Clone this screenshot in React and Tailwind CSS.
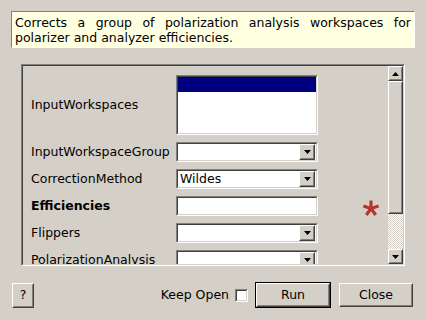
function Sunken({ className = '', inner = '', children }) {
  return (
    <div className={`border border-t-[#808080] border-l-[#808080] border-b-white border-r-white ${className}`}>
      <div className={`h-full w-full border border-t-[#404040] border-l-[#404040] border-b-[#d4d0c8] border-r-[#d4d0c8] ${inner}`}>
        {children}
      </div>
    </div>
  );
}

function Raised({ className = '', inner = '', children }) {
  return (
    <div className={`border border-t-white border-l-white border-b-[#404040] border-r-[#404040] ${className}`}>
      <div className={`flex h-full w-full items-center justify-center border border-t-[#d4d0c8] border-l-[#d4d0c8] border-b-[#808080] border-r-[#808080] ${inner}`}>
        {children}
      </div>
    </div>
  );
}

function Arrow({ up }) {
  return (
    <svg width="7" height="4" viewBox="0 0 7 4">
      <path d={up ? 'M3.5 0 L7 4 L0 4 Z' : 'M0 0 L7 0 L3.5 4 Z'} fill="#000" />
    </svg>
  );
}

function Combo({ value }) {
  return (
    <Sunken className="h-[20px] w-[142px]" inner="flex items-center bg-white">
      <span className="flex-1 pl-[2px] leading-none">{value}</span>
      <Raised className="mr-[1px] h-[16px] w-[16px] bg-[#d4d0c8]">
        <Arrow />
      </Raised>
    </Sunken>
  );
}

function Row({ label, bold, children, extra }) {
  return (
    <div className="flex h-[20px] items-center">
      <div className={`w-[145px] whitespace-nowrap ${bold ? 'font-bold' : ''}`}>{label}</div>
      {children}
      {extra}
    </div>
  );
}

function Asterisk() {
  const arms = [[0, -8], [7.6, -2.5], [4.7, 6.5], [-4.7, 6.5], [-7.6, -2.5]];
  return (
    <svg width="16" height="16" viewBox="-8 -8.5 16 16" className="ml-[45px] mt-[4px]">
      {arms.map(([x, y], i) => (
        <line key={i} x1="0" y1="0" x2={x} y2={y} stroke="#b5372a" strokeWidth="3.2" />
      ))}
    </svg>
  );
}

export default function App() {
  return (
    <div className="flex h-[320px] w-[426px] flex-col overflow-hidden bg-[#d4d0c8] pt-[11px] text-[12.5px] text-black" style={{ fontFamily: '"DejaVu Sans", sans-serif' }}>
      {/* description */}
      <div className="ml-[11px] h-[37px] w-[404px] border border-t-[#808080] border-l-[#808080] border-b-white border-r-white bg-[#ffffe1] px-[3px] pt-[3px] leading-[15px]">
        <p className="text-justify [text-align-last:justify]">
          Corrects a group of polarization analysis workspaces for
        </p>
        <p>polarizer and analyzer efficiencies.</p>
      </div>

      {/* property frame */}
      <Sunken className="ml-[21px] mt-[16px] h-[202px] w-[384px]" inner="flex overflow-hidden">
        <div className="flex flex-1 flex-col gap-[7px] overflow-hidden pl-[8px] pt-[9px]">
          <div className="flex h-[60px] shrink-0 items-center">
            <div className="w-[145px]">InputWorkspaces</div>
            <Sunken className="h-[60px] w-[142px]" inner="bg-white">
              <div className="h-[15px] bg-[#000080]" />
            </Sunken>
          </div>
          <Row label="InputWorkspaceGroup"><Combo value="" /></Row>
          <Row label="CorrectionMethod"><Combo value="Wildes" /></Row>
          <Row label="Efficiencies" bold extra={<Asterisk />}>
            <Sunken className="h-[20px] w-[142px]" inner="bg-white" />
          </Row>
          <Row label="Flippers"><Combo value="" /></Row>
          <div className="shrink-0">
            <Row label="PolarizationAnalysis"><Combo value="" /></Row>
          </div>
        </div>

        {/* scrollbar */}
        <div className="flex w-[15px] flex-col">
          <Raised className="h-[15px] bg-[#d4d0c8]"><Arrow up /></Raised>
          <Raised className="h-[133px] bg-[#d4d0c8]" />
          <div className="flex-1 bg-[repeating-conic-gradient(#ffffff_0_25%,#d4d0c8_0_50%)] bg-[length:2px_2px]" />
          <Raised className="h-[15px] bg-[#d4d0c8]"><Arrow /></Raised>
        </div>
      </Sunken>

      {/* buttons */}
      <div className="mt-[16px] flex h-[26px] items-center pl-[12px] pr-[13px]">
        <Raised className="h-[25px] w-[22px]">?</Raised>
        <div className="flex-1" />
        <span className="mr-[6px]">Keep Open</span>
        <Sunken className="mr-[7px] h-[13px] w-[13px]" inner="bg-white" />
        <div className="h-[26px] w-[76px] border border-black">
          <Raised className="h-full w-full">Run</Raised>
        </div>
        <Raised className="ml-[8px] h-[24px] w-[74px]">Close</Raised>
      </div>
    </div>
  );
}
